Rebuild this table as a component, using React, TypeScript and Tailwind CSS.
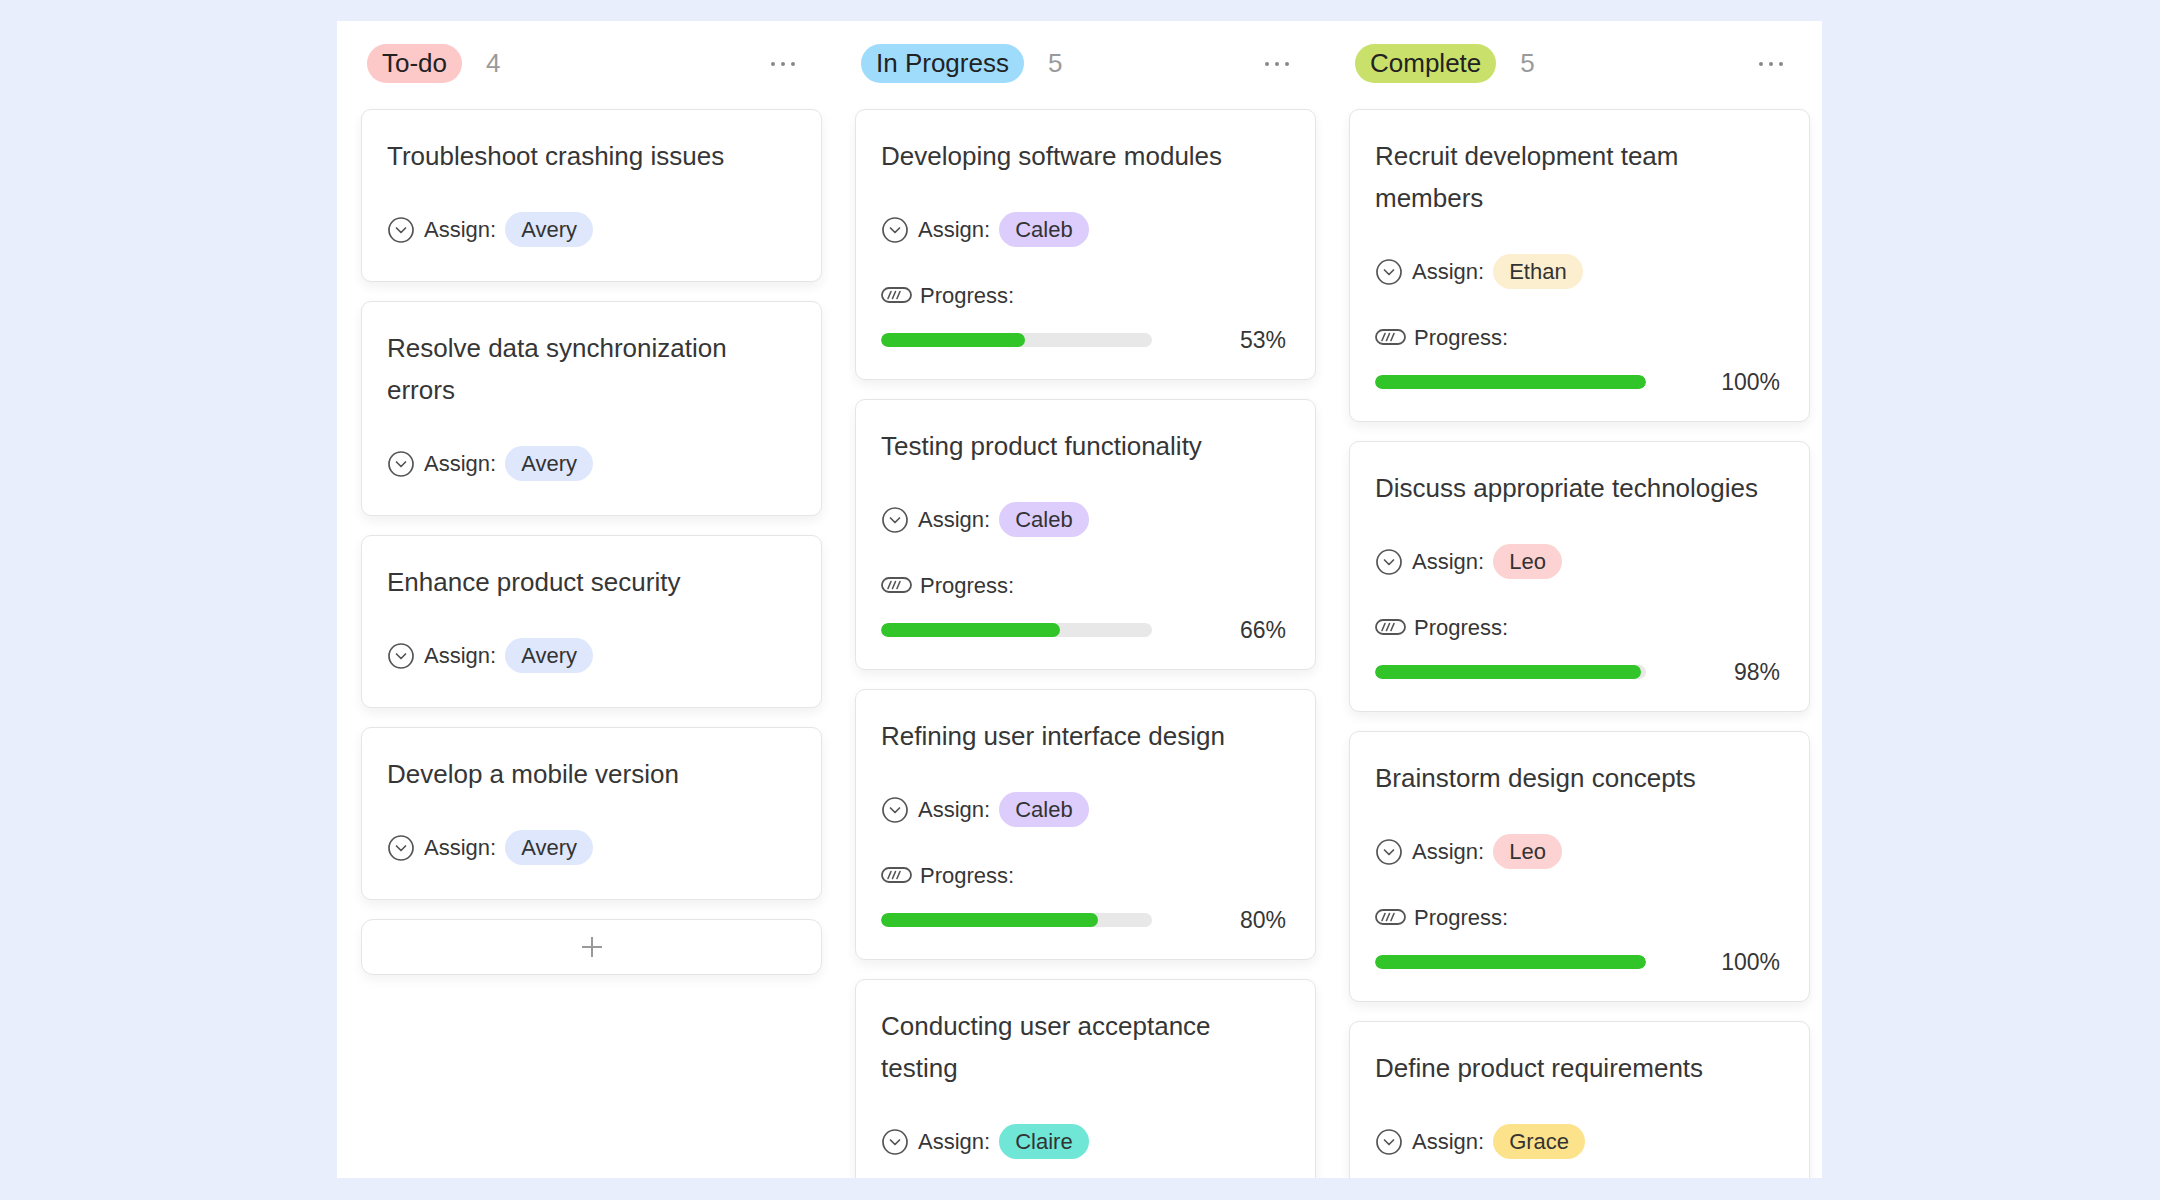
type Task = {
  title: string;
  who: string;
  whoBg: string;
  progress?: number;
};

type Column = {
  name: string;
  pillBg: string;
  count: number;
  tasks: Task[];
  addButton?: boolean;
};

const columns: Column[] = [
  {
    name: "To-do",
    pillBg: "bg-[#fcc8c8]",
    count: 4,
    addButton: true,
    tasks: [
      { title: "Troubleshoot crashing issues", who: "Avery", whoBg: "bg-[#dfe7fc]" },
      { title: "Resolve data synchronization errors", who: "Avery", whoBg: "bg-[#dfe7fc]" },
      { title: "Enhance product security", who: "Avery", whoBg: "bg-[#dfe7fc]" },
      { title: "Develop a mobile version", who: "Avery", whoBg: "bg-[#dfe7fc]" },
    ],
  },
  {
    name: "In Progress",
    pillBg: "bg-[#9fdcfb]",
    count: 5,
    tasks: [
      { title: "Developing software modules", who: "Caleb", whoBg: "bg-[#dccdfc]", progress: 53 },
      { title: "Testing product functionality", who: "Caleb", whoBg: "bg-[#dccdfc]", progress: 66 },
      { title: "Refining user interface design", who: "Caleb", whoBg: "bg-[#dccdfc]", progress: 80 },
      { title: "Conducting user acceptance testing", who: "Claire", whoBg: "bg-[#6fe6d6]" },
    ],
  },
  {
    name: "Complete",
    pillBg: "bg-[#c9e06b]",
    count: 5,
    tasks: [
      { title: "Recruit development team members", who: "Ethan", whoBg: "bg-[#fcefcf]", progress: 100 },
      { title: "Discuss appropriate technologies", who: "Leo", whoBg: "bg-[#fcd2d2]", progress: 98 },
      { title: "Brainstorm design concepts", who: "Leo", whoBg: "bg-[#fcd2d2]", progress: 100 },
      { title: "Define product requirements", who: "Grace", whoBg: "bg-[#fde28c]" },
    ],
  },
];

function ChevronCircle() {
  return (
    <svg width="28" height="28" viewBox="0 0 28 28" fill="none" className="shrink-0">
      <circle cx="14" cy="14" r="12" stroke="#555" strokeWidth="1.7" />
      <path d="M9.5 12l4.5 4.5 4.5-4.5" stroke="#555" strokeWidth="1.7" strokeLinecap="round" strokeLinejoin="round" />
    </svg>
  );
}

function ProgressIcon() {
  return (
    <svg width="31" height="16" viewBox="0 0 31 16" fill="none" className="shrink-0">
      <rect x="1" y="1" width="29" height="14" rx="7" stroke="#555" strokeWidth="1.8" />
      <path d="M7 11.5l3-7M11.5 11.5l3-7M16 11.5l3-7" stroke="#555" strokeWidth="1.6" strokeLinecap="round" />
    </svg>
  );
}

function Card({ task }: { task: Task }) {
  return (
    <div
      className={`rounded-[10px] border border-[#e5e5e8] bg-white px-[25px] pt-[25px] shadow-[0_5px_12px_rgba(0,0,0,0.06)] ${
        task.progress === undefined ? "pb-[34px]" : "pb-[25px]"
      }`}
    >
      <div className="text-[26px] leading-[42px] text-[#363636]">{task.title}</div>

      <div className="mt-[35px] flex h-[35px] items-center">
        <ChevronCircle />
        <span className="ml-[9px] text-[22px] text-[#363636]">Assign:</span>
        <span className={`ml-[9px] flex h-[35px] items-center rounded-full px-[16px] text-[22px] text-[#333] ${task.whoBg}`}>
          {task.who}
        </span>
      </div>

      {task.progress !== undefined && (
        <>
          <div className="mt-[34px] flex h-[28px] items-center">
            <ProgressIcon />
            <span className="ml-[8px] text-[22px] text-[#363636]">Progress:</span>
          </div>
          <div className="mt-[17px] flex h-[28px] items-center justify-between pr-[4px]">
            <div className="h-[14px] w-[271px] overflow-hidden rounded-full bg-[#e8e8e8]">
              <div className="h-full rounded-full bg-[#32c52a]" style={{ width: `${task.progress}%` }} />
            </div>
            <span className="text-[23px] text-[#363636]">{task.progress}%</span>
          </div>
        </>
      )}
    </div>
  );
}

export default function App() {
  return (
    <div
      className="h-screen w-full overflow-hidden bg-[#e8eefc] pl-[337px] pt-[21px]"
      style={{ fontFamily: '"Liberation Sans", Arial, sans-serif' }}
    >
      <div className="flex h-[1157px] w-[1485px] gap-[33px] overflow-hidden bg-white pl-[24px] pt-[23px]">
        {columns.map((col) => (
          <div key={col.name} className="flex w-[461px] shrink-0 flex-col">
            {/* Column header */}
            <div className="mb-[26px] flex h-[39px] items-center justify-between pl-[6px] pr-[27px]">
              <div className="flex items-center gap-[24px]">
                <span className={`flex h-[39px] items-center rounded-full px-[15px] text-[26px] text-[#222] ${col.pillBg}`}>
                  {col.name}
                </span>
                <span className="text-[26px] text-[#9a9a9a]">{col.count}</span>
              </div>
              <div className="flex items-center gap-[6px]">
                <span className="h-[4px] w-[4px] rounded-full bg-[#888]" />
                <span className="h-[4px] w-[4px] rounded-full bg-[#888]" />
                <span className="h-[4px] w-[4px] rounded-full bg-[#888]" />
              </div>
            </div>

            <div className="flex flex-col gap-[19px]">
              {col.tasks.map((t) => (
                <Card key={t.title} task={t} />
              ))}
              {col.addButton && (
                <div className="flex h-[56px] items-center justify-center rounded-[12px] border border-[#e5e5e8] bg-white shadow-[0_5px_12px_rgba(0,0,0,0.05)]">
                  <svg width="24" height="24" viewBox="0 0 24 24" fill="none">
                    <path d="M12 2v20M2 12h20" stroke="#999" strokeWidth="2" />
                  </svg>
                </div>
              )}
            </div>
          </div>
        ))}
      </div>
    </div>
  );
}
